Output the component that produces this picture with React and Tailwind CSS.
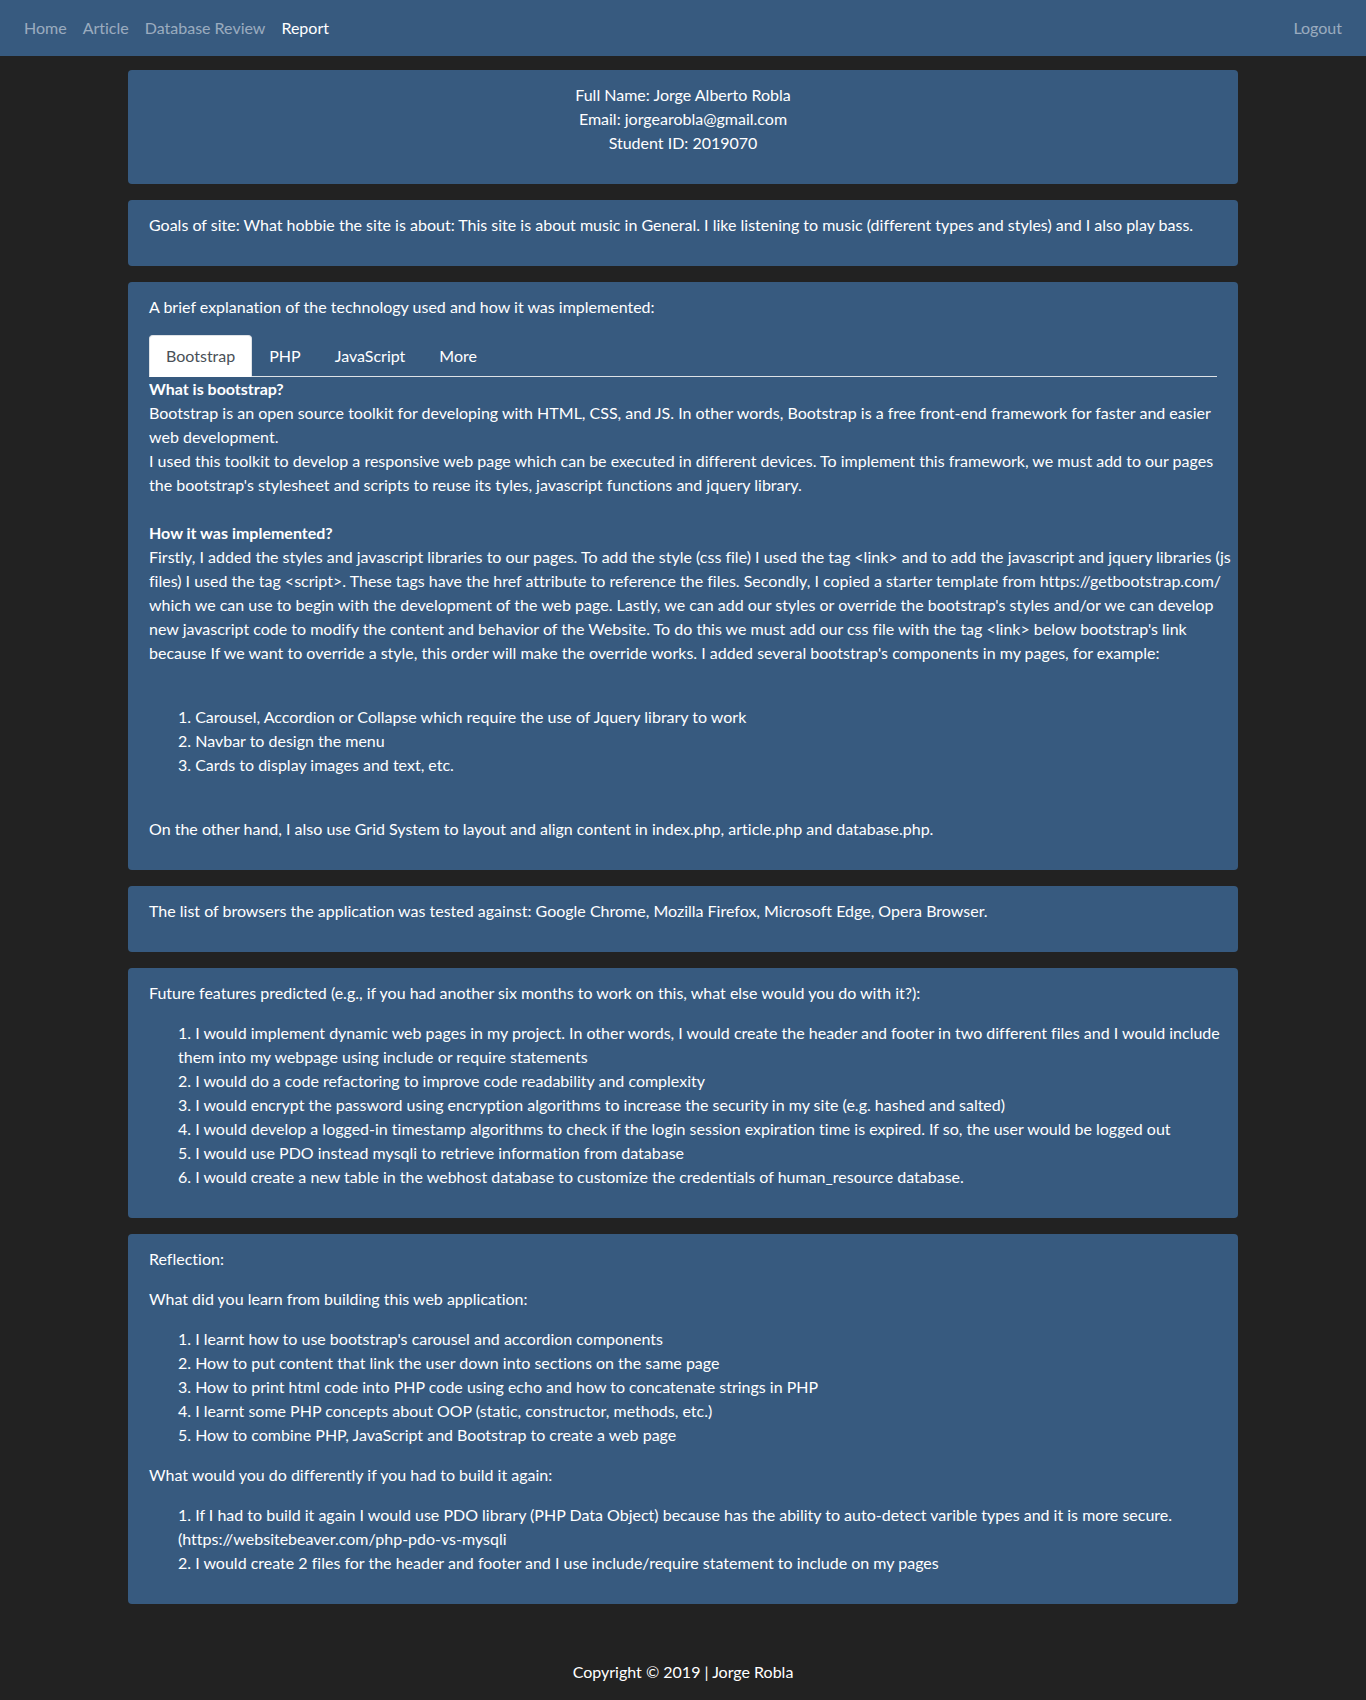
function Card({ children }) {
  return (
    <section className="mx-auto mb-4 w-full max-w-[1110px] rounded bg-[#375a7f] px-[21px] py-[13px]">
      {children}
    </section>
  );
}

function NumberedList({ items }) {
  return (
    <ol className="mb-4 ml-[29px] list-inside list-decimal xl:-mr-5">
      {items.map((item, index) => (
        <li key={index}>{item}</li>
      ))}
    </ol>
  );
}

const WideBreak = () => <br className="hidden xl:inline" />;

const navItems = ["Home", "Article", "Database Review", "Report"];
const tabs = ["Bootstrap", "PHP", "JavaScript", "More"];

export default function App() {
  return (
    <div className="min-h-screen bg-[#222222] font-['Lato',sans-serif] text-base leading-6 text-white [font-variant-ligatures:none]">
      <nav className="flex justify-between bg-[#375a7f] p-4">
        <div className="flex">
          {navItems.map((item) => (
            <a key={item} href="#" className={item === "Report" ? "px-2 text-white" : "px-2 text-white/50"}>
              {item}
            </a>
          ))}
        </div>
        <a href="#" className="px-2 text-white/50">Logout</a>
      </nav>

      <main className="px-4 pt-[14px]">
        <Card>
          <p className="mb-4 text-center">
            Full Name: Jorge Alberto Robla
            <br />
            Email: jorgearobla@gmail.com
            <br />
            Student ID: 2019070
          </p>
        </Card>

        <Card>
          <p className="mb-4">
            Goals of site: What hobbie the site is about: This site is about music in General. I like listening to music (different types and styles) and I also play bass.
          </p>
        </Card>

        <Card>
          <p className="mb-4">A brief explanation of the technology used and how it was implemented:</p>
          <div role="tablist" className="flex border-b border-[#dee2e6]">
            {tabs.map((tab) => (
              <button
                key={tab}
                type="button"
                role="tab"
                aria-selected={tab === "Bootstrap"}
                className={
                  tab === "Bootstrap"
                    ? "-mb-px rounded-t border border-[#dee2e6] border-b-white bg-white px-4 py-2 text-[#495057]"
                    : "-mb-px border border-transparent px-4 py-2 text-white"
                }
              >
                {tab}
              </button>
            ))}
          </div>
          <div role="tabpanel">
            <h2 className="font-bold">What is bootstrap?</h2>
            <p>
              Bootstrap is an open source toolkit for developing with HTML, CSS, and JS. In other words, Bootstrap is a free front-end framework for faster and easier <WideBreak />
              web development.
            </p>
            <p className="mb-6">
              I used this toolkit to develop a responsive web page which can be executed in different devices. To implement this framework, we must add to our pages <WideBreak />
              the bootstrap's stylesheet and scripts to reuse its tyles, javascript functions and jquery library.
            </p>
            <h2 className="font-bold">How it was implemented?</h2>
            <p className="mb-10 xl:-mr-5">
              Firstly, I added the styles and javascript libraries to our pages. To add the style (css file) I used the tag &lt;link&gt; and to add the javascript and jquery libraries (js <WideBreak />
              files) I used the tag &lt;script&gt;. These tags have the href attribute to reference the files. Secondly, I copied a starter template from https://getbootstrap.com/ <WideBreak />
              which we can use to begin with the development of the web page. Lastly, we can add our styles or override the bootstrap's styles and/or we can develop <WideBreak />
              new javascript code to modify the content and behavior of the Website. To do this we must add our css file with the tag &lt;link&gt; below bootstrap's link <WideBreak />
              because If we want to override a style, this order will make the override works. I added several bootstrap's components in my pages, for example:
            </p>
            <NumberedList
              items={[
                "Carousel, Accordion or Collapse which require the use of Jquery library to work",
                "Navbar to design the menu",
                "Cards to display images and text, etc.",
              ]}
            />
            <p className="mt-10 mb-4">
              On the other hand, I also use Grid System to layout and align content in index.php, article.php and database.php.
            </p>
          </div>
        </Card>

        <Card>
          <p className="mb-4">
            The list of browsers the application was tested against: Google Chrome, Mozilla Firefox, Microsoft Edge, Opera Browser.
          </p>
        </Card>

        <Card>
          <p className="mb-4">
            Future features predicted (e.g., if you had another six months to work on this, what else would you do with it?):
          </p>
          <NumberedList
            items={[
              <>
                I would implement dynamic web pages in my project. In other words, I would create the header and footer in two different files and I would include <WideBreak />
                them into my webpage using include or require statements
              </>,
              "I would do a code refactoring to improve code readability and complexity",
              "I would encrypt the password using encryption algorithms to increase the security in my site (e.g. hashed and salted)",
              "I would develop a logged-in timestamp algorithms to check if the login session expiration time is expired. If so, the user would be logged out",
              "I would use PDO instead mysqli to retrieve information from database",
              "I would create a new table in the webhost database to customize the credentials of human_resource database.",
            ]}
          />
        </Card>

        <Card>
          <p className="mb-4">Reflection:</p>
          <p className="mb-4">What did you learn from building this web application:</p>
          <NumberedList
            items={[
              "I learnt how to use bootstrap's carousel and accordion components",
              "How to put content that link the user down into sections on the same page",
              "How to print html code into PHP code using echo and how to concatenate strings in PHP",
              "I learnt some PHP concepts about OOP (static, constructor, methods, etc.)",
              "How to combine PHP, JavaScript and Bootstrap to create a web page",
            ]}
          />
          <p className="mb-4">What would you do differently if you had to build it again:</p>
          <NumberedList
            items={[
              <>
                If I had to build it again I would use PDO library (PHP Data Object) because has the ability to auto-detect varible types and it is more secure. <WideBreak />
                (https://websitebeaver.com/php-pdo-vs-mysqli
              </>,
              "I would create 2 files for the header and footer and I use include/require statement to include on my pages",
            ]}
          />
        </Card>
      </main>

      <footer className="pt-10 pb-4 text-center">Copyright © 2019 | Jorge Robla</footer>
    </div>
  );
}
